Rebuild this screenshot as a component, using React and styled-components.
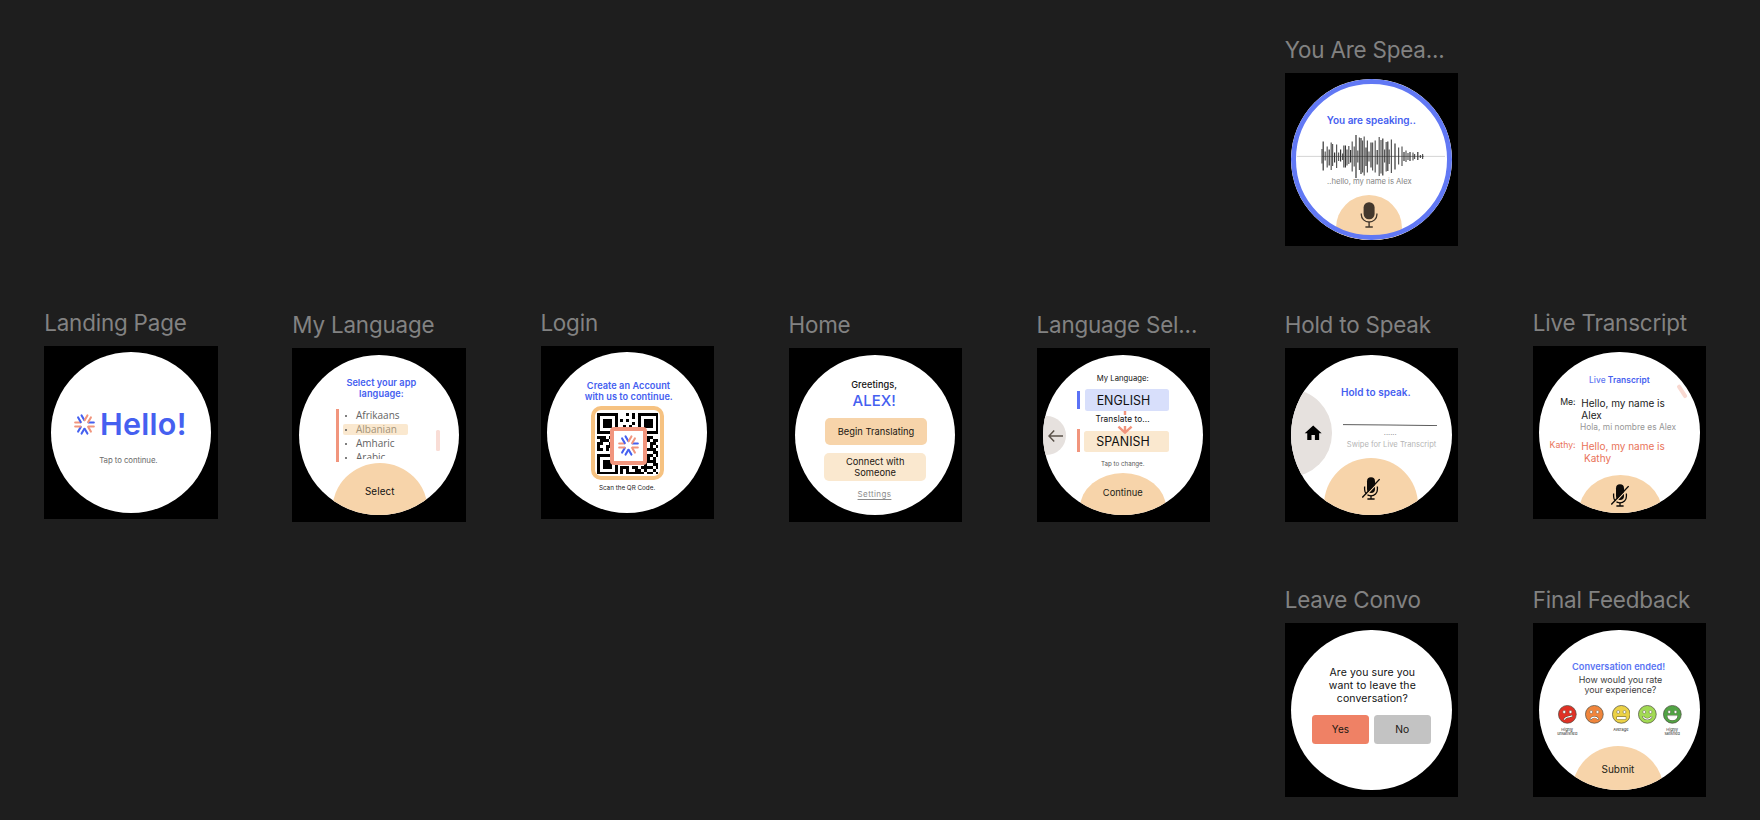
import React from "react";
import styled, { createGlobalStyle } from "styled-components";
import { MdHome } from "react-icons/md";

const BLUE = "#4560f0";
const SALMON = "#f1957d";
const PEACH = "#f7d4aa";
const CREAM = "#fae8cf";

const GlobalStyle = createGlobalStyle`
  * { box-sizing: border-box; }
  body { margin: 0; background: #1e1e1e; overflow: hidden; }
`;

const Canvas = styled.main`
  width: 1760px;
  height: 820px;
  padding: 38px 0 0 44.4px;
  display: grid;
  grid-template-columns: repeat(7, 173.5px);
  grid-template-rows: 275.2px 275.2px auto;
  align-content: start;
  column-gap: 74.6px;
  overflow: hidden;
  background: #1e1e1e;
  font-family: Inter, "Liberation Sans", sans-serif;
  color: #111;
`;

const Node = styled.section`
  grid-column: ${(p) => p.$col};
  grid-row: ${(p) => p.$row};
  margin-top: ${(p) => (p.$raised ? "-2.2px" : 0)};
`;

const NodeLabel = styled.h2`
  margin: 0 0 11.5px -0.2px;
  padding-top: 0.8px;
  font-size: 22.4px;
  line-height: 22.6px;
  font-weight: 400;
  letter-spacing: -0.18px;
  color: #828282;
  white-space: nowrap;
`;

const Frame = styled.div`
  width: 173.5px;
  height: 173.5px;
  padding: 6.6px 6.3px;
  background: #000;
`;

const Face = styled.div`
  position: relative;
  width: 160.4px;
  height: 160.4px;
  padding-top: 0.3px;
  border-radius: 50%;
  overflow: hidden;
  background: #fff;
  display: flex;
  flex-direction: column;
  align-items: center;
  & > * { flex-shrink: 0; }
`;

const Line = styled.div`
  margin-top: ${(p) => p.$top || 0}px;
  margin-left: ${(p) => 2 * (p.$shift || 0)}px;
  font-size: ${(p) => p.$size}px;
  line-height: ${(p) => p.$size}px;
  font-weight: ${(p) => p.$weight || 400};
  letter-spacing: ${(p) => p.$track || 0}px;
  color: ${(p) => p.$color || "#111"};
  white-space: nowrap;
`;

const Heading = styled(Line).attrs((p) => ({ $weight: 600, $color: p.$color || BLUE }))``;

const Underlined = styled(Line)`
  text-decoration: underline;
  text-decoration-thickness: 0.7px;
  text-underline-offset: 2px;
`;

const Dome = styled.div`
  position: absolute;
  left: ${(p) => p.$left}px;
  top: ${(p) => p.$top}px;
  width: ${(p) => p.$width}px;
  height: ${(p) => p.$height || p.$width}px;
  padding-top: ${(p) => p.$inset}px;
  border-radius: 50%;
  background: ${PEACH};
  display: flex;
  flex-direction: column;
  align-items: center;
`;

const SideDisc = styled.div`
  position: absolute;
  left: ${(p) => p.$left}px;
  top: ${(p) => p.$top}px;
  width: ${(p) => p.$size}px;
  height: ${(p) => p.$size}px;
  padding-right: ${(p) => p.$inset}px;
  border-radius: 50%;
  background: #e6e1de;
  display: flex;
  align-items: center;
  justify-content: flex-end;
`;

const Button = styled.div`
  margin-top: ${(p) => p.$top || 0}px;
  margin-left: ${(p) => 2 * (p.$shift || 0)}px;
  width: ${(p) => p.$width}px;
  height: ${(p) => p.$height}px;
  border-radius: ${(p) => p.$radius || 5}px;
  background: ${(p) => p.$fill};
  display: flex;
  align-items: center;
  justify-content: center;
  text-align: center;
  font-size: ${(p) => p.$size || 9.3}px;
  line-height: 11px;
  letter-spacing: 0.03px;
  color: #1c1712;
`;

const ButtonRow = styled.div`
  display: flex;
  gap: 4.5px;
  margin-top: 9.6px;
`;

/* landing */
const Brand = styled.div`
  display: flex;
  align-items: flex-start;
  align-self: flex-start;
  gap: 5.1px;
  margin: 56px 0 0 23.3px;
  & > svg { margin-top: 5.6px; }
`;

/* language list */
const Picker = styled.div`
  display: flex;
  align-self: flex-start;
  gap: 4px;
  margin: 9.2px 0 0 37px;
`;
const Bar = styled.div`
  width: 3px;
  height: ${(p) => p.$height}px;
  margin-top: ${(p) => p.$top || 0}px;
  background: ${(p) => p.$fill};
`;
const List = styled.div`
  width: 65px;
  height: 50.9px;
  overflow: hidden;
  font-family: "Open Sans", "Noto Sans", sans-serif;
  font-size: 10px;
  line-height: 14px;
  color: #636363;
`;
const Item = styled.div`
  display: flex;
  padding-left: 2.4px;
  ${(p) =>
    p.$active &&
    `margin: 1.9px 0 0.5px;
     padding-bottom: 1.4px;
     line-height: 10.2px;
     border-radius: 2px;
     background: ${CREAM};
     color: #a39379;`}
  &::before {
    content: "";
    width: 2px;
    height: 2px;
    margin: ${(p) => (p.$active ? "5px" : "7px")} 8.8px 0 0;
    border-radius: 50%;
    background: #555;
  }
`;
const ScrollThumb = styled.div`
  position: absolute;
  left: 137.3px;
  top: 75.7px;
  width: 3.7px;
  height: 20.3px;
  border-radius: 1.5px;
  background: #f9ddd6;
`;

/* QR */
const QrFrame = styled.div`
  position: relative;
  display: flex;
  align-items: center;
  justify-content: center;
  width: 73.5px;
  height: 74.3px;
  margin: 4.9px 0 0 1.2px;
  border: 4px solid #f6c281;
  border-radius: 10px;
`;
const QrBadge = styled.div`
  position: absolute;
  left: 14.6px;
  top: 17px;
  width: 37px;
  height: 37.4px;
  display: flex;
  align-items: center;
  justify-content: center;
  border: 4px solid ${SALMON};
  border-radius: 4px;
  background: #fff;
`;

/* language selection */
const Choice = styled.div`
  display: flex;
  align-self: flex-start;
  gap: ${(p) => p.$gap}px;
  margin: ${(p) => p.$top}px 0 0 33.7px;
`;
const Field = styled.div`
  width: 84.3px;
  height: 21.2px;
  margin-top: ${(p) => p.$drop || 0}px;
  padding: ${(p) => p.$push || 0}px 0 0 ${(p) => p.$indent}px;
  border-radius: 2.5px;
  background: ${(p) => p.$fill};
  display: flex;
  align-items: center;
  font-size: 12.4px;
  line-height: 14px;
`;
const ArrowLayer = styled.svg`
  position: absolute;
  left: 74.3px;
  top: 56px;
`;

/* transcript */
const Message = styled.div`
  align-self: flex-start;
  display: grid;
  grid-template-columns: 36.3px auto;
  column-gap: 5.8px;
  margin-top: ${(p) => p.$top}px;
  color: ${(p) => p.$color};
  font-size: 10px;
  line-height: 12px;
  white-space: nowrap;
`;
const Speaker = styled.div`
  margin-top: -0.8px;
  text-align: right;
  font-size: 8.7px;
`;
const Indent = styled.span`
  margin-left: 2.7px;
`;
const SwipeMark = styled.div`
  position: absolute;
  left: 140.5px;
  top: 32px;
  width: 3.6px;
  height: 14.6px;
  border-radius: 1.8px;
  background: #f9d9d1;
  transform: rotate(-33deg);
`;
const LightWord = styled.span`
  font-weight: 500;
  opacity: 0.85;
`;

/* speaking */
const Ring = styled.div`
  position: absolute;
  inset: 0;
  border: 5px solid #6178f4;
  border-radius: 50%;
`;
const WaveArt = styled.svg`
  margin-top: 8.8px;
`;
const FlatLine = styled.svg`
  margin: 27.4px 0 0 36.6px;
`;

/* feedback */
const Ratings = styled.div`
  align-self: flex-start;
  display: grid;
  grid-template-columns: 27px 26.7px 26.3px 25px 18.7px;
  margin: 10.4px 0 0 18.6px;
`;
const Rating = styled.div`
  width: 18.7px;
  display: flex;
  flex-direction: column;
  align-items: center;
`;
const Caption = styled.div`
  margin-top: 3.9px;
  font-size: 3.9px;
  line-height: 4.4px;
  text-align: center;
  white-space: nowrap;
  color: #222;
`;

const ARMS = [
  [0, BLUE, SALMON],
  [60, SALMON, BLUE],
  [120, BLUE, BLUE],
  [180, SALMON, SALMON],
  [240, BLUE, BLUE],
  [300, SALMON, SALMON],
];

function Logo({ size = 21 }) {
  return (
    <svg width={size} height={size} viewBox="-10.5 -10.5 21 21" strokeWidth="2.1" strokeLinecap="round">
      {ARMS.map(([angle, a, b]) => (
        <g key={angle} transform={`rotate(${angle})`}>
          <line x1="4" y1="-2" x2="9.3" y2="-2" stroke={a} />
          <line x1="4" y1="2" x2="9.3" y2="2" stroke={b} />
        </g>
      ))}
    </svg>
  );
}

const QR = [
  "111111100010101111111",
  "100000100000101000001",
  "101110101010001011101",
  "101110100000101011101",
  "101110100101001011101",
  "100000101010101000001",
  "111111101010101111111",
  "000000000000000000000",
  "111011000000000101100",
  "011100100000000111011",
  "110011000000000010110",
  "100110100000000110101",
  "110101100000000101110",
  "000000000000000010011",
  "111111100000000111101",
  "100000100000000101010",
  "101110100000000111110",
  "101110100000000010011",
  "101110101110110111101",
  "100000101010011010010",
  "111111101011111101101",
];

function QrCode() {
  return (
    <svg width="61.5" height="61.5" viewBox="0 0 21 21" shapeRendering="crispEdges">
      {QR.map((row, y) =>
        [...row].map((c, x) => (c === "1" ? <rect key={`${x}-${y}`} x={x} y={y} width="1" height="1" /> : null))
      )}
    </svg>
  );
}

function Mic({ muted }) {
  const ink = muted ? "#0c0a08" : "#43382d";
  return (
    <svg width="18" height={muted ? 23 : 27} viewBox={muted ? "0 0 18 23" : "0 0 18 27"} fill="none" stroke={ink}>
      {muted ? (
        <>
          <rect x="5" y="0.3" width="8" height="15.6" rx="4" fill={ink} stroke="none" />
          <path d="M2.6 9.5v3a6.4 6.4 0 0 0 12.8 0v-3" strokeWidth="1.3" />
          <path d="M9 18.8v3M5.4 22h7.2" strokeWidth="1.3" />
          <path d="M1 21.5L18 3.6" stroke={PEACH} strokeWidth="1.2" />
          <path d="M0.3 20.5L17.6 2.2" strokeWidth="1.3" />
        </>
      ) : (
        <>
          <rect x="3.6" y="0.3" width="11" height="17" rx="5.2" fill={ink} stroke="none" />
          <path d="M1.3 11.6v1.2a7.8 7.2 0 0 0 15.6 0v-1.2" strokeWidth="1.3" />
          <path d="M9.1 20v4.6M5.4 25h7.4" strokeWidth="1.4" />
        </>
      )}
    </svg>
  );
}

const WAVE = [
  [31, 7.5, 7], [32.2, 15, 14], [34.2, 5, 4], [36.2, 10, 11], [38.2, 7, 9], [40.2, 14, 13.5], [41.6, 12.5, 9.5],
  [43.6, 4, 6], [45.6, 12, 11.5], [47.6, 4, 4.5], [49.6, 7, 5], [51.6, 3, 3.5], [52.8, 11, 11], [54.4, 11, 11],
  [56, 7, 9], [57.8, 10.5, 7.5], [59.6, 6.5, 6], [61.2, 15, 15], [63.2, 10, 10], [65, 21.5, 21.5], [66.8, 6, 6],
  [68.4, 19, 13.5], [70, 18.5, 17.5], [71.6, 16, 16], [73.2, 20, 19], [75, 9, 9.5], [76.4, 16, 16], [78, 5, 5],
  [80, 14, 11], [81.6, 14, 14], [84.2, 16, 16], [86.2, 6.5, 8], [88.2, 19.5, 19.5], [90, 16.5, 17], [91.8, 18, 19],
  [93.6, 7, 6], [95.2, 14.5, 15], [96.8, 15, 14.5], [98.2, 7, 7.5], [100.4, 17, 16.5], [104, 13, 13],
  [107.6, 9, 8], [111, 10, 9.5], [113, 4.5, 4.5], [115, 6, 5.5], [117, 3.5, 3.5], [119, 4.5, 4.5],
  [122, 4, 4], [123.6, 2.5, 2.5], [126.8, 4.5, 3.5], [129.4, 1.5, 1.6], [131.6, 2.3, 2.6],
];

function Wave() {
  return (
    <WaveArt width="160" height="44" viewBox="0 0 160 44">
      <path d="M6 22.4H154" stroke="#cfcfcf" strokeWidth="0.9" />
      <path d="M31 22.4H133" stroke="#777" strokeWidth="0.8" />
      {WAVE.map(([x, up, down], i) => (
        <line key={x} x1={x} x2={x} y1={22.4 - up} y2={22.4 + down} stroke="#333" strokeWidth="1.2" opacity={i % 3 === 1 ? 1 : 0.82} />
      ))}
    </WaveArt>
  );
}

const SMILEYS = [
  { fill: "#e03125", mouth: "M6.4 14.2c1-2.2 3-2 4.4-2.4 1.4-.3 2.2-.4 3-.8", top: "Highly", bottom: "unsatisfied" },
  { fill: "#f0853c", mouth: "M5.8 14c1.3-2.6 5.8-2.6 7.2 0" },
  { fill: "#ebd145", mouth: "M5.6 12.6h7.6v1H5.6z", top: "Average" },
  { fill: "#a2da53", mouth: "M5.4 12c1.6 2.8 6.2 2.8 7.9 0" },
  { fill: "#51a344", mouth: "M5 11.2h8.8c-.6 4.6-8.2 4.6-8.8 0z", top: "Highly", bottom: "satisfied" },
];

function Smiley({ fill, mouth }) {
  return (
    <svg width="18.7" height="18.7" viewBox="0 0 18.7 18.7">
      <circle cx="9.35" cy="9.35" r="8.9" fill={fill} stroke="#4c4c40" strokeWidth="0.7" />
      <g fill="#fff" stroke="#55503c" strokeWidth="0.45">
        <circle cx="6.2" cy="7" r="1.45" />
        <circle cx="12.5" cy="7" r="1.45" />
      </g>
      <path d={mouth} fill="none" stroke="#55503c" strokeWidth="2" strokeLinecap="round" />
      <path d={mouth} fill={mouth.endsWith("z") ? "#fff" : "none"} stroke="#fff" strokeWidth="1.2" strokeLinecap="round" />
    </svg>
  );
}

function Watch({ title, col, row, raised, children }) {
  return (
    <Node $col={col} $row={row} $raised={raised}>
      <NodeLabel>{title}</NodeLabel>
      <Frame>
        <Face>{children}</Face>
      </Frame>
    </Node>
  );
}

export default function App() {
  return (
    <>
      <GlobalStyle />
      <Canvas>
        <Watch title="You Are Spea..." col={6} row={1}>
          <Heading $size={10} $top={35.4} $track={-0.02}>You are speaking..</Heading>
          <Wave />
          <Line $size={7.7} $top={0.4} $shift={-2} $track={-0.03} $color="#868686">..hello, my name is Alex</Line>
          <Dome $left={45} $top={115.7} $width={66} $inset={7}>
            <Mic />
          </Dome>
          <Ring />
        </Watch>

        <Watch title="Landing Page" col={1} row={2} raised>
          <Brand>
            <Logo />
            <Heading $size={30.5} $track={0.25}>Hello!</Heading>
          </Brand>
          <Line $size={7.8} $top={17.7} $shift={-2.5} $track={-0.06} $color="#6b6b6b">Tap to continue.</Line>
        </Watch>

        <Watch title="My Language" col={2} row={2}>
          <Heading $size={9.2} $top={23} $shift={2.3} $track={0.03}>Select your app</Heading>
          <Heading $size={9.2} $top={2.1} $shift={2.5} $track={0.08}>language:</Heading>
          <Picker>
            <Bar $height={52.7} $top={1.2} $fill={SALMON} />
            <List>
              <Item>Afrikaans</Item>
              <Item $active>Albanian</Item>
              <Item>Amharic</Item>
              <Item>Arabic</Item>
            </List>
          </Picker>
          <ScrollThumb />
          <Dome $left={33} $top={108.7} $width={96} $inset={23.2}>
            <Line $size={9.8} $track={0.15}>Select</Line>
          </Dome>
        </Watch>

        <Watch title="Login" col={3} row={2} raised>
          <Heading $size={9.2} $top={28} $shift={1.4} $track={0.05}>Create an Account</Heading>
          <Heading $size={9.2} $top={2.1} $shift={1.7} $track={0.05}>with us to continue.</Heading>
          <QrFrame>
            <QrCode />
            <QrBadge>
              <Logo />
            </QrBadge>
          </QrFrame>
          <Line $size={6.3} $top={5} $color="#222">Scan the QR Code.</Line>
        </Watch>

        <Watch title="Home" col={4} row={2}>
          <Line $size={9.2} $top={24.7} $shift={-1} $weight={500} $track={0.05}>Greetings,</Line>
          <Line $size={15} $top={3.9} $shift={-1} $weight={500} $color={BLUE}>ALEX!</Line>
          <Button $top={10.2} $shift={0.8} $width={102.3} $height={27.3} $fill={PEACH}>Begin Translating</Button>
          <Button $top={8.1} $width={102.3} $height={28} $fill={CREAM}>Connect with<br />Someone</Button>
          <Underlined $size={8} $top={8.9} $shift={-0.7} $track={0.4} $color="#8c8c8c">Settings</Underlined>
        </Watch>

        <Watch title="Language Sel..." col={5} row={2}>
          <Line $size={7.7} $top={20.5} $shift={-0.5} $track={0.05}>My Language:</Line>
          <Choice $top={6.3} $gap={5.3}>
            <Bar $height={18} $top={2} $fill="#5b72f5" />
            <Field $fill="#d8dffb" $indent={11.6} $push={2.6}>ENGLISH</Field>
          </Choice>
          <Line $size={8.3} $top={4.3} $shift={-0.7} $track={0.07}>Translate to...</Line>
          <Choice $top={6.2} $gap={4.6}>
            <Bar $height={22.6} $fill={SALMON} />
            <Field $fill={CREAM} $indent={12} $drop={1.6} $push={0.6}>SPANISH</Field>
          </Choice>
          <Line $size={6.2} $top={8.5} $shift={-0.5} $color="#555">Tap to change.</Line>
          <ArrowLayer width="16" height="24" fill="none" stroke={SALMON} strokeWidth="2.4">
            <path d="M8 0v4M8 15v7M1.4 15.6l6.6 6 6.6-6" />
          </ArrowLayer>
          <SideDisc $left={-16.3} $top={61.7} $size={39} $inset={3}>
            <svg width="15" height="12" fill="none" stroke="#5b534b" strokeWidth="1.5">
              <path d="M15 6H1M6.2 0.6L1 6l5.2 5.4" />
            </svg>
          </SideDisc>
          <Dome $left={36.7} $top={118.3} $width={86} $height={70} $inset={14.7}>
            <Line $size={9.3} $track={0.04} $color="#231d17">Continue</Line>
          </Dome>
        </Watch>

        <Watch title="Hold to Speak" col={6} row={2}>
          <Heading $size={10} $top={32} $shift={4.5} $track={0.03}>Hold to speak.</Heading>
          <FlatLine width="94" height="2">
            <path d="M0 0.6L46 1l48 0.6" fill="none" stroke="#4a4a4a" strokeWidth="0.9" />
          </FlatLine>
          <Line $size={7.4} $top={2.2} $shift={18.8} $color="#8d8d8d">......</Line>
          <Line $size={7.6} $top={5.4} $shift={20.2} $color="#b5b5b5">Swipe for Live Transcript</Line>
          <SideDisc $left={-46.3} $top={34.7} $size={87.6} $inset={9.3}>
            <MdHome size={20.4} color="#000" />
          </SideDisc>
          <Dome $left={32.7} $top={103.7} $width={94} $inset={18.3}>
            <Mic muted />
          </Dome>
        </Watch>

        <Watch title="Live Transcript" col={7} row={2} raised>
          <Heading $size={8.4} $top={22.9} $track={0.05}><LightWord>Live</LightWord> Transcript</Heading>
          <Message $top={12.7} $color="#1b1b1b">
            <Speaker>Me:</Speaker>
            <div>Hello, my name is<br />Alex</div>
          </Message>
          <Line $size={8.4} $top={2.3} $shift={8.6} $color="#979797">Hola, mi nombre es Alex</Line>
          <Message $top={8.4} $color="#e97258">
            <Speaker>Kathy:</Speaker>
            <div>Hello, my name is<br /><Indent>Kathy</Indent></div>
          </Message>
          <SwipeMark />
          <Dome $left={39.3} $top={123} $width={83} $height={74} $inset={8.7}>
            <Mic muted />
          </Dome>
        </Watch>

        <Watch title="Leave Convo" col={6} row={3}>
          <Line $size={10.5} $top={38.3} $shift={1} $track={0.1}>Are you sure you</Line>
          <Line $size={10.5} $top={2.5} $shift={1} $track={0.15}>want to leave the</Line>
          <Line $size={10.5} $top={2.5} $shift={1} $track={0.13}>conversation?</Line>
          <ButtonRow>
            <Button $width={57.3} $height={29} $radius={3.5} $size={10} $fill="#ef8165">Yes</Button>
            <Button $width={57.3} $height={29} $radius={3.5} $size={10.3} $fill="#c3c3c3">No</Button>
          </ButtonRow>
        </Watch>

        <Watch title="Final Feedback" col={7} row={3}>
          <Heading $size={9.2} $top={31.8} $shift={-0.8} $track={0.04} $color="#5b75f3">Conversation ended!</Heading>
          <Line $size={8.9} $top={4.4} $shift={1} $color="#3d3d3d">How would you rate</Line>
          <Line $size={8.8} $top={1.8} $shift={1} $color="#3d3d3d">your experience?</Line>
          <Ratings>
            {SMILEYS.map((s) => (
              <Rating key={s.fill}>
                <Smiley {...s} />
                {s.top && (
                  <Caption>
                    {s.top}
                    <br />
                    {s.bottom}
                  </Caption>
                )}
              </Rating>
            ))}
          </Ratings>
          <Dome $left={32.7} $top={116} $width={92} $inset={17.7}>
            <Line $size={10} $color="#231d17">Submit</Line>
          </Dome>
        </Watch>
      </Canvas>
    </>
  );
}
